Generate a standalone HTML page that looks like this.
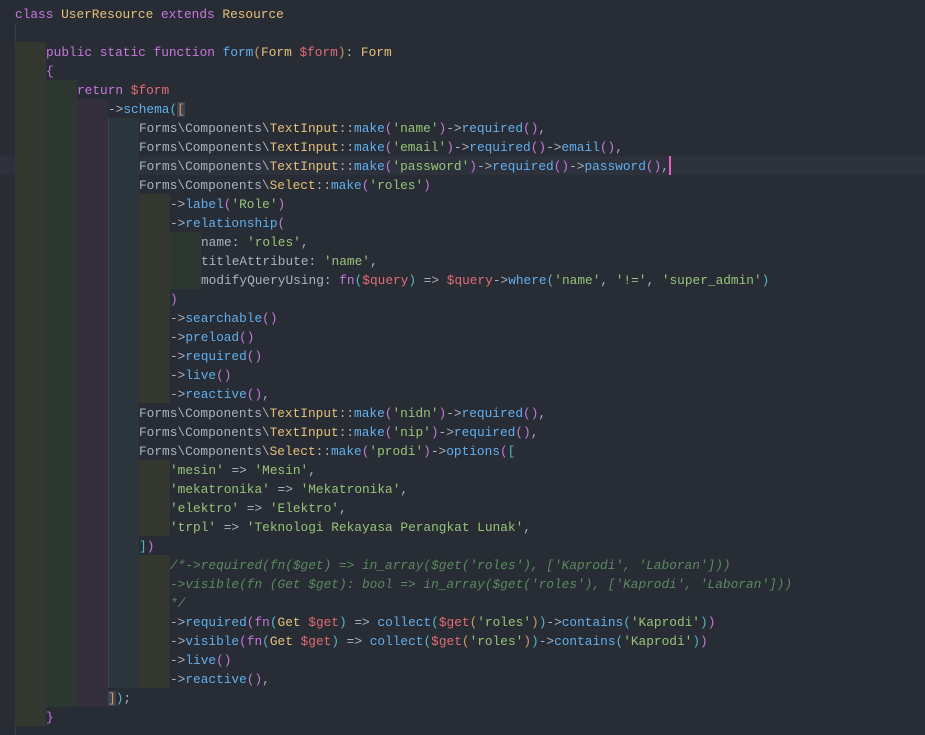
<!DOCTYPE html>
<html><head><meta charset="utf-8"><style>
html,body{margin:0;padding:0;background:#282c34;width:925px;height:735px;overflow:hidden}
#c{position:relative;width:925px;height:735px;font-family:"Liberation Mono",monospace;font-size:12.8px;color:#abb2bf}
.l{position:absolute;left:0;width:925px;height:19px;line-height:21px;white-space:pre;padding-left:15px;box-sizing:border-box}
.b{display:inline-block;width:31px;height:19px;vertical-align:top}
.b1{background:#33372f}.b2{background:#2d3732}.b3{background:#322e3b}.b4{background:#2a353c;box-shadow:inset 1px 0 0 #3b4650}
.k{color:#c678dd}.y{color:#e5c07b}.f{color:#61afef}.v{color:#e06c75}.s{color:#98c379}.c{color:#56b6c2}.o{color:#d19a66}.p{color:#c678dd}
.cm{color:#5a8a5f;font-style:italic}
.hl{background:#2c313b}
.g{border-left:1px solid #3a3e46}
</style></head><body><div id="c">
<div class="l" style="top:4px"><span class="k">class</span> <span class="y">UserResource</span> <span class="k">extends</span> <span class="y">Resource</span></div>
<div class="l" style="top:23px"><span class="g" style="display:inline-block;height:19px;vertical-align:top"></span></div>
<div class="l" style="top:42px"><span class="b b1"></span><span class="k">public static function</span> <span class="f">form</span><span class="o">(</span><span class="y">Form</span> <span class="v">$form</span><span class="o">)</span>: <span class="y">Form</span></div>
<div class="l" style="top:61px"><span class="b b1"></span><span class="p">{</span></div>
<div class="l" style="top:80px"><span class="b b1"></span><span class="b b2"></span><span class="k">return</span> <span class="v">$form</span></div>
<div class="l" style="top:99px"><span class="b b1"></span><span class="b b2"></span><span class="b b3"></span>-><span class="f">schema</span><span class="c">(</span><span class="o" style="background:#3e4451">[</span></div>
<div class="l" style="top:118px"><span class="b b1"></span><span class="b b2"></span><span class="b b3"></span><span class="b b4"></span>Forms\Components\<span class="y">TextInput</span>::<span class="f">make</span><span class="p">(</span><span class="s">'name'</span><span class="p">)</span>-><span class="f">required</span><span class="p">()</span>,</div>
<div class="l" style="top:137px"><span class="b b1"></span><span class="b b2"></span><span class="b b3"></span><span class="b b4"></span>Forms\Components\<span class="y">TextInput</span>::<span class="f">make</span><span class="p">(</span><span class="s">'email'</span><span class="p">)</span>-><span class="f">required</span><span class="p">()</span>-><span class="f">email</span><span class="p">()</span>,</div>
<div class="l hl" style="top:156px"><span class="b b1"></span><span class="b b2"></span><span class="b b3"></span><span class="b b4"></span>Forms\Components\<span class="y">TextInput</span>::<span class="f">make</span><span class="p">(</span><span class="s">'password'</span><span class="p">)</span>-><span class="f">required</span><span class="p">()</span>-><span class="f">password</span><span class="p">()</span>,<span style="display:inline-block;width:2px;height:19px;background:#e85dbf;vertical-align:top"></span></div>
<div class="l" style="top:175px"><span class="b b1"></span><span class="b b2"></span><span class="b b3"></span><span class="b b4"></span>Forms\Components\<span class="y">Select</span>::<span class="f">make</span><span class="p">(</span><span class="s">'roles'</span><span class="p">)</span></div>
<div class="l" style="top:194px"><span class="b b1"></span><span class="b b2"></span><span class="b b3"></span><span class="b b4"></span><span class="b b1"></span>-><span class="f">label</span><span class="p">(</span><span class="s">'Role'</span><span class="p">)</span></div>
<div class="l" style="top:213px"><span class="b b1"></span><span class="b b2"></span><span class="b b3"></span><span class="b b4"></span><span class="b b1"></span>-><span class="f">relationship</span><span class="p">(</span></div>
<div class="l" style="top:232px"><span class="b b1"></span><span class="b b2"></span><span class="b b3"></span><span class="b b4"></span><span class="b b1"></span><span class="b b2"></span>name: <span class="s">'roles'</span>,</div>
<div class="l" style="top:251px"><span class="b b1"></span><span class="b b2"></span><span class="b b3"></span><span class="b b4"></span><span class="b b1"></span><span class="b b2"></span>titleAttribute: <span class="s">'name'</span>,</div>
<div class="l" style="top:270px"><span class="b b1"></span><span class="b b2"></span><span class="b b3"></span><span class="b b4"></span><span class="b b1"></span><span class="b b2"></span>modifyQueryUsing: <span class="k">fn</span><span class="c">(</span><span class="v">$query</span><span class="c">)</span> => <span class="v">$query</span>-><span class="f">where</span><span class="c">(</span><span class="s">'name'</span>, <span class="s">'!='</span>, <span class="s">'super_admin'</span><span class="c">)</span></div>
<div class="l" style="top:289px"><span class="b b1"></span><span class="b b2"></span><span class="b b3"></span><span class="b b4"></span><span class="b b1"></span><span class="p">)</span></div>
<div class="l" style="top:308px"><span class="b b1"></span><span class="b b2"></span><span class="b b3"></span><span class="b b4"></span><span class="b b1"></span>-><span class="f">searchable</span><span class="p">()</span></div>
<div class="l" style="top:327px"><span class="b b1"></span><span class="b b2"></span><span class="b b3"></span><span class="b b4"></span><span class="b b1"></span>-><span class="f">preload</span><span class="p">()</span></div>
<div class="l" style="top:346px"><span class="b b1"></span><span class="b b2"></span><span class="b b3"></span><span class="b b4"></span><span class="b b1"></span>-><span class="f">required</span><span class="p">()</span></div>
<div class="l" style="top:365px"><span class="b b1"></span><span class="b b2"></span><span class="b b3"></span><span class="b b4"></span><span class="b b1"></span>-><span class="f">live</span><span class="p">()</span></div>
<div class="l" style="top:384px"><span class="b b1"></span><span class="b b2"></span><span class="b b3"></span><span class="b b4"></span><span class="b b1"></span>-><span class="f">reactive</span><span class="p">()</span>,</div>
<div class="l" style="top:403px"><span class="b b1"></span><span class="b b2"></span><span class="b b3"></span><span class="b b4"></span>Forms\Components\<span class="y">TextInput</span>::<span class="f">make</span><span class="p">(</span><span class="s">'nidn'</span><span class="p">)</span>-><span class="f">required</span><span class="p">()</span>,</div>
<div class="l" style="top:422px"><span class="b b1"></span><span class="b b2"></span><span class="b b3"></span><span class="b b4"></span>Forms\Components\<span class="y">TextInput</span>::<span class="f">make</span><span class="p">(</span><span class="s">'nip'</span><span class="p">)</span>-><span class="f">required</span><span class="p">()</span>,</div>
<div class="l" style="top:441px"><span class="b b1"></span><span class="b b2"></span><span class="b b3"></span><span class="b b4"></span>Forms\Components\<span class="y">Select</span>::<span class="f">make</span><span class="p">(</span><span class="s">'prodi'</span><span class="p">)</span>-><span class="f">options</span><span class="p">(</span><span class="c">[</span></div>
<div class="l" style="top:460px"><span class="b b1"></span><span class="b b2"></span><span class="b b3"></span><span class="b b4"></span><span class="b b1"></span><span class="s">'mesin'</span> => <span class="s">'Mesin'</span>,</div>
<div class="l" style="top:479px"><span class="b b1"></span><span class="b b2"></span><span class="b b3"></span><span class="b b4"></span><span class="b b1"></span><span class="s">'mekatronika'</span> => <span class="s">'Mekatronika'</span>,</div>
<div class="l" style="top:498px"><span class="b b1"></span><span class="b b2"></span><span class="b b3"></span><span class="b b4"></span><span class="b b1"></span><span class="s">'elektro'</span> => <span class="s">'Elektro'</span>,</div>
<div class="l" style="top:517px"><span class="b b1"></span><span class="b b2"></span><span class="b b3"></span><span class="b b4"></span><span class="b b1"></span><span class="s">'trpl'</span> => <span class="s">'Teknologi Rekayasa Perangkat Lunak'</span>,</div>
<div class="l" style="top:536px"><span class="b b1"></span><span class="b b2"></span><span class="b b3"></span><span class="b b4"></span><span class="c">]</span><span class="p">)</span></div>
<div class="l" style="top:555px"><span class="b b1"></span><span class="b b2"></span><span class="b b3"></span><span class="b b4"></span><span class="b b1"></span><span class="cm">/*->required(fn($get) => in_array($get('roles'), ['Kaprodi', 'Laboran']))</span></div>
<div class="l" style="top:574px"><span class="b b1"></span><span class="b b2"></span><span class="b b3"></span><span class="b b4"></span><span class="b b1"></span><span class="cm">->visible(fn (Get $get): bool => in_array($get('roles'), ['Kaprodi', 'Laboran']))</span></div>
<div class="l" style="top:593px"><span class="b b1"></span><span class="b b2"></span><span class="b b3"></span><span class="b b4"></span><span class="b b1"></span><span class="cm">*/</span></div>
<div class="l" style="top:612px"><span class="b b1"></span><span class="b b2"></span><span class="b b3"></span><span class="b b4"></span><span class="b b1"></span>-><span class="f">required</span><span class="p">(</span><span class="k">fn</span><span class="c">(</span><span class="y">Get</span> <span class="v">$get</span><span class="c">)</span> => <span class="f">collect</span><span class="c">(</span><span class="v">$get</span><span class="o">(</span><span class="s">'roles'</span><span class="o">)</span><span class="c">)</span>-><span class="f">contains</span><span class="c">(</span><span class="s">'Kaprodi'</span><span class="c">)</span><span class="p">)</span></div>
<div class="l" style="top:631px"><span class="b b1"></span><span class="b b2"></span><span class="b b3"></span><span class="b b4"></span><span class="b b1"></span>-><span class="f">visible</span><span class="p">(</span><span class="k">fn</span><span class="c">(</span><span class="y">Get</span> <span class="v">$get</span><span class="c">)</span> => <span class="f">collect</span><span class="c">(</span><span class="v">$get</span><span class="o">(</span><span class="s">'roles'</span><span class="o">)</span><span class="c">)</span>-><span class="f">contains</span><span class="c">(</span><span class="s">'Kaprodi'</span><span class="c">)</span><span class="p">)</span></div>
<div class="l" style="top:650px"><span class="b b1"></span><span class="b b2"></span><span class="b b3"></span><span class="b b4"></span><span class="b b1"></span>-><span class="f">live</span><span class="p">()</span></div>
<div class="l" style="top:669px"><span class="b b1"></span><span class="b b2"></span><span class="b b3"></span><span class="b b4"></span><span class="b b1"></span>-><span class="f">reactive</span><span class="p">()</span>,</div>
<div class="l" style="top:688px"><span class="b b1"></span><span class="b b2"></span><span class="b b3"></span><span class="o" style="background:#3e4451">]</span><span class="c">)</span>;</div>
<div class="l" style="top:707px"><span class="b b1"></span><span class="p">}</span></div>
<div class="l" style="top:726px"><span class="g" style="display:inline-block;height:19px;vertical-align:top"></span></div>
</div></body></html>
